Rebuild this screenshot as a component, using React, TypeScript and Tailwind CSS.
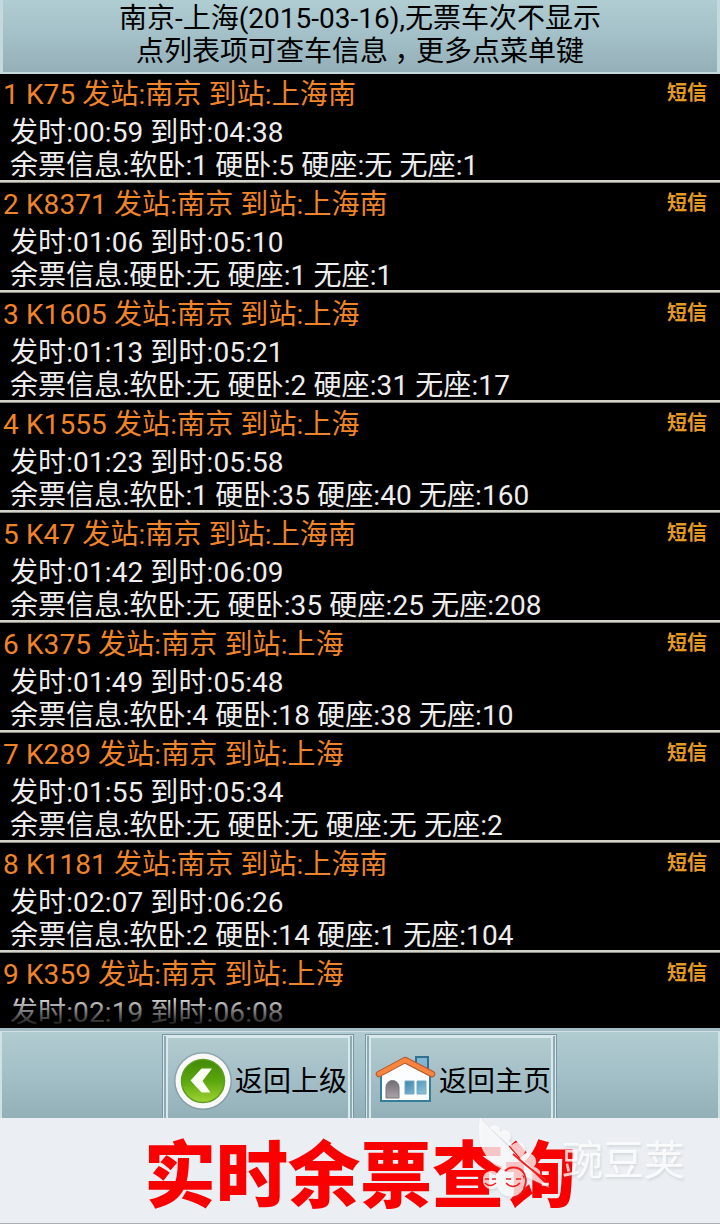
import React from "react";

const trains = [
    {no: "K75", to: "上海南", start: "00:59", end: "04:38", tickets: "软卧:1 硬卧:5 硬座:无 无座:1"},
    {no: "K8371", to: "上海南", start: "01:06", end: "05:10", tickets: "硬卧:无 硬座:1 无座:1"},
    {no: "K1605", to: "上海", start: "01:13", end: "05:21", tickets: "软卧:无 硬卧:2 硬座:31 无座:17"},
    {no: "K1555", to: "上海", start: "01:23", end: "05:58", tickets: "软卧:1 硬卧:35 硬座:40 无座:160"},
    {no: "K47", to: "上海南", start: "01:42", end: "06:09", tickets: "软卧:无 硬卧:35 硬座:25 无座:208"},
    {no: "K375", to: "上海", start: "01:49", end: "05:48", tickets: "软卧:4 硬卧:18 硬座:38 无座:10"},
    {no: "K289", to: "上海", start: "01:55", end: "05:34", tickets: "软卧:无 硬卧:无 硬座:无 无座:2"},
    {no: "K1181", to: "上海南", start: "02:07", end: "06:26", tickets: "软卧:2 硬卧:14 硬座:1 无座:104"},
    {no: "K359", to: "上海", start: "02:19", end: "06:08", tickets: ""},
];

function Header() {
    return <header className="h-[74px] shrink-0 border-x-3 border-b-2 border-[#c5d8de] bg-linear-to-b from-[#b0cdd2] via-[#a3bfc8] to-[#94afb8] pt-[2px] text-center leading-[33px] text-black">
        <div>南京-上海(2015-03-16),无票车次不显示</div>
        <div>点列表项可查车信息<span className="inline-block w-[28px] pr-[1px] text-center [font-feature-settings:'halt']">，</span>更多点菜单键</div>
    </header>;
}

function TrainRow({index, train}: any) {
    return <div className="flex h-[110px] shrink-0 flex-col">
        <div className="flex h-[40px] justify-between pr-[13px] pl-[3px] leading-[41px] tracking-[0.1px] text-[#f08429]">
            <span>{index} {train.no} 发站:南京 到站:{train.to}</span>
            <span className="text-[20px] leading-[39px] font-bold tracking-normal text-[#e59a25]">短信</span>
        </div>
        <div className="h-[33px] pl-[10px] leading-[38px] tracking-[0.1px]">发时:{train.start} 到时:{train.end}</div>
        <div className="h-[33px] pl-[10px] leading-[38px] tracking-[0.1px]">{train.tickets && "余票信息:" + train.tickets}</div>
        <div className="h-[3px] border-b border-[#8c8b82] bg-[#d4d3c8]"/>
    </div>;
}

function BackIcon() {
    return <svg className="h-[62px] w-[60px] shrink-0" viewBox="0 0 60 62">
        <defs>
            <linearGradient id="green" x1="0" y1="0" x2="0" y2="1">
                <stop offset="0" stopColor="#438908"/>
                <stop offset="0.5" stopColor="#5ba60e"/>
                <stop offset="1" stopColor="#a0d432"/>
            </linearGradient>
        </defs>
        <circle cx="30" cy="31" r="29" fill="#758b91" opacity="0.55"/>
        <circle cx="30" cy="31" r="27.5" fill="#f8f8f8"/>
        <circle cx="30" cy="31" r="21.5" fill="url(#green)" stroke="#5e9d20" strokeWidth="1.5"/>
        <path d="M28.500 18.500h10.500l-9.500 12.500 8 11.500H28.500L17.500 30.500z" fill="#fbfff6"/>
    </svg>;
}

function HomeIcon() {
    return <svg className="h-[50px] w-[62px] shrink-0" viewBox="0 0 62 50">
        <defs>
            <linearGradient id="door" x1="0" y1="0" x2="0" y2="1">
                <stop offset="0" stopColor="#716c73"/>
                <stop offset="1" stopColor="#aaa3a8"/>
            </linearGradient>
            <linearGradient id="pane" x1="0" y1="0" x2="1" y2="1">
                <stop offset="0" stopColor="#4187aa"/>
                <stop offset="1" stopColor="#8fc5dc"/>
            </linearGradient>
        </defs>
        <path d="M41 1h12v19L41 11z" fill="#84b4cf" stroke="#31708e" strokeWidth="2"/>
        <path d="M6 18v27h49V18L30 4z" fill="#fbfdff" stroke="#367d99" strokeWidth="2"/>
        <path d="M11 42V31a6.500 6.500 0 0 1 13 0v11z" fill="url(#door)" stroke="#777" strokeWidth="1"/>
        <path d="M30 25h9v13h-9zM42 25h9v13h-9z" fill="url(#pane)" stroke="#75a8c0" strokeWidth="1"/>
        <path d="M4 18L30 4l27 14" fill="none" stroke="#b4572b" strokeWidth="6.500" strokeLinecap="round" strokeLinejoin="round"/>
        <path d="M4 18L30 4l27 14" fill="none" stroke="#f7843f" strokeWidth="4.500" strokeLinecap="round" strokeLinejoin="round"/>
    </svg>;
}

function FooterButton({icon, label}: any) {
    return <button className="h-[85px] w-[192px] border border-b-0 border-[#7897a3]">
        <div className="h-full border-x border-t border-[#dbe9ec] bg-[#8eabb5] px-[2px]">
            <div className="flex h-full items-center justify-center border-x-2 border-t-2 border-[#d8e8eb] bg-linear-to-b from-[#b2cbce] via-[#a3bec7] to-[#93b0b9] pt-[4px] pl-[5px]">
                {icon}
                <span className="ml-[2px] pt-[2px] whitespace-nowrap">{label}</span>
            </div>
        </div>
    </button>;
}

function Footer() {
    return <div className="h-[90px] shrink-0 border-t-3 border-[#a4bcc5] bg-[#d0e0e3] px-[2px] pt-px text-black">
        <div className="flex h-full justify-center gap-[11px] bg-linear-to-b from-[#b0ccd0] via-[#a3bfc8] to-[#93b0b9] pt-[2px] pr-[2px]">
            <FooterButton icon={<BackIcon/>} label="返回上级"/>
            <FooterButton icon={<HomeIcon/>} label="返回主页"/>
        </div>
    </div>;
}

function Watermark() {
    return <div className="absolute top-0 left-[478px] flex drop-shadow-[1px_2px_1px_rgba(120,130,140,0.25)]">
        <svg className="h-[84px] w-[84px] shrink-0" viewBox="0 0 84 84">
            <g fill="white" opacity="0.75">
                <path d="M2 0C0 12 0 25 7 36c5 9 12 14 23 16l14 5 28 13C58 57 42 41 30 29 18 15 10 10 2 0z"/>
                <path d="M12 10a5.500 5.500 0 0 1 10 4 6 6 0 0 1 9 9l3 4a7.500 7.500 0 1 1 10 11 8 8 0 0 1 12 11 7 7 0 0 1 6 9C48 48 40 37 31 27z"/>
                <path d="M5 62a8.500 8.500 0 0 1 15-6 12 12 0 0 1 10-5 14 14 0 1 1-7 24l-4-6A8.500 8.500 0 0 1 5 62z"/>
            </g>
            <g fill="none" stroke="#f42020" strokeWidth="1.500">
                <path d="M27 53a12 12 0 0 1 20 5q2 6-1 12" strokeWidth="2"/>
                <path d="M7 61h4M14 61h4M28 61h5M38 61h5M7 65q5 5 11 0M28 65q7 7 14 0"/>
                <path d="M35 36q18 16 33 26" strokeWidth="1.800"/>
            </g>
        </svg>
        <span className="mt-[22px] text-[41px] leading-[42px] font-normal text-white/80">豌豆荚</span>
    </div>;
}

export default function App() {
    return <div className="flex h-[1224px] w-[720px] flex-col overflow-hidden bg-black font-['Roboto','Noto_Sans_CJK_SC',sans-serif] text-[28px] text-[#eeeeee]">
        <Header/>
        <div className="relative h-[954px] shrink-0 overflow-hidden">
            {trains.map((train, i) => <TrainRow key={train.no} index={i + 1} train={train}/>)}
            <div className="absolute inset-x-0 bottom-0 h-[32px] bg-linear-to-b from-transparent to-black"/>
        </div>
        <Footer/>
        <div className="relative h-[106px] shrink-0 border-b border-[#a9b0b4] bg-[#ebeff3]">
            <div className="pt-[7px] text-center text-[72px] leading-[104px] font-black text-[#fa0000]">实时余票查询</div>
            <Watermark/>
        </div>
    </div>;
}
